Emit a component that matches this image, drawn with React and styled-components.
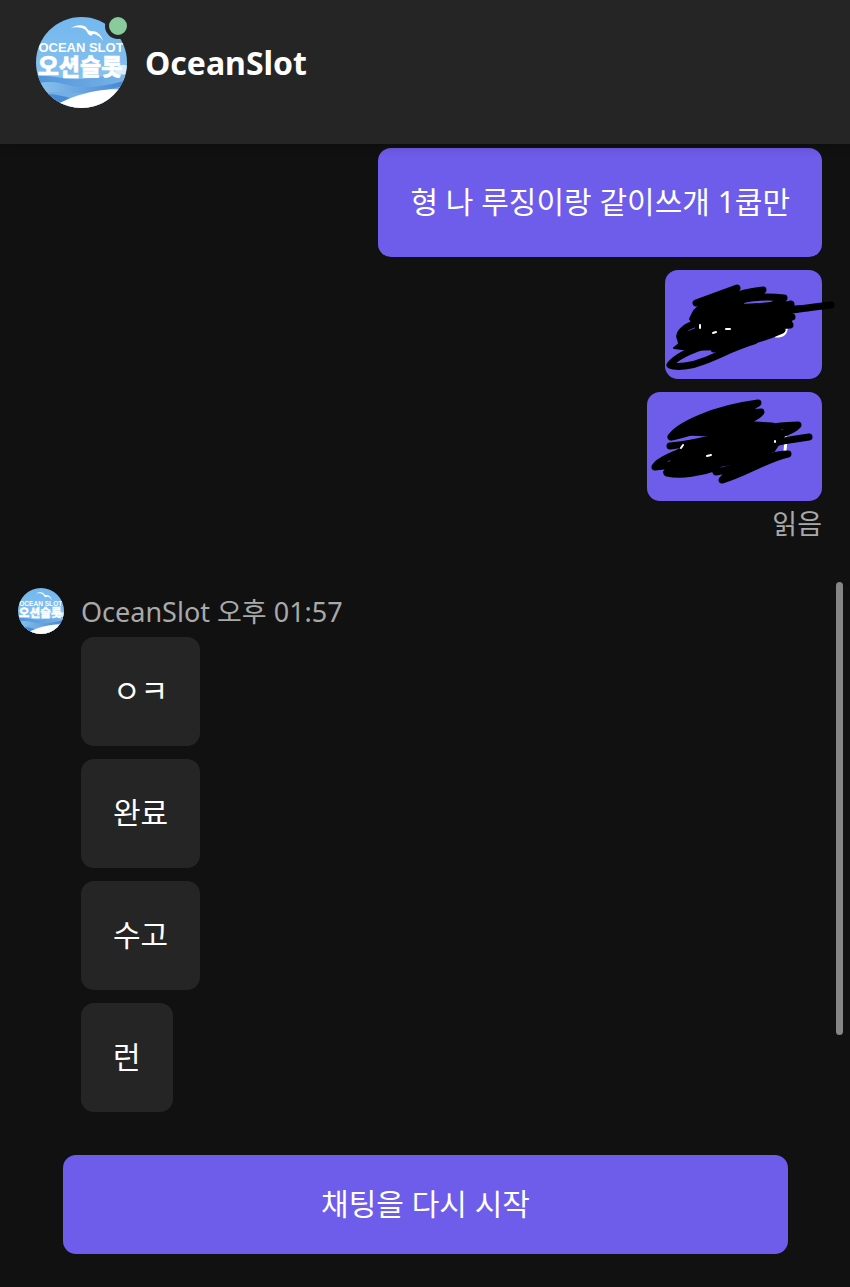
import React from "react";
import styled, { createGlobalStyle } from "styled-components";

const GlobalStyle = createGlobalStyle`
*{
	box-sizing: border-box;
}
body{
	margin: 0;
	background: #111111;
	color: #ffffff;
	font-family: "Noto Sans", "Noto Sans CJK KR", sans-serif;
}
`;

const received = ["ㅇㅋ", "완료", "수고", "런"];

const Logo = () => {
	return (
		<svg viewBox="0 0 91 91" width="100%" height="100%" role="img" aria-label="OceanSlot">
			<defs>
				<linearGradient id="sky" x1="0" y1="0" x2="0" y2="1">
					<stop offset="0" stopColor="#74b8ee" />
					<stop offset="1" stopColor="#8fc4ef" />
				</linearGradient>
				<linearGradient id="sea" x1="0" y1="0" x2="1" y2="0">
					<stop offset="0" stopColor="#8cc3ee" />
					<stop offset="1" stopColor="#4585d0" />
				</linearGradient>
				<linearGradient id="deep" x1="0" y1="0" x2="1" y2="0">
					<stop offset="0" stopColor="#4f94da" />
					<stop offset="1" stopColor="#7ab3e8" />
				</linearGradient>
				<clipPath id="round">
					<circle cx="45.5" cy="45.5" r="45.5" />
				</clipPath>
			</defs>
			<g clipPath="url(#round)">
				<rect width="91" height="91" fill="url(#sky)" />
				<path d="M80 52c3-5 8-5 12-3v14H74z" fill="#d9edfb" />
				<path d="M0 59c18-1 28 4 46 3s32-6 45-4v33H0z" fill="url(#deep)" />
				<path d="M0 67c14-4 24-1 36 2s36 0 55-6v28H0z" fill="url(#sea)" />
				<path d="M0 77c14-3 26-2 40-1s36-4 51-8v23H0z" fill="#73afe6" />
				<path d="M0 78c10-2 20-1 34 3l-16 10H0z" fill="#4789d3" />
				<path d="M18 89c12-7 26-12 42-15 12-2 22-2 31-1v18H18z" fill="#ffffff" />
				<path d="M35 11C39 8 46 7 50 10c2 3 3 4 5 4 6 0 10 3 12 10-3-5-7-7-10-7l-2 2-3-2c-1-3-3-5-6-6-4-1-8-1-11 0z" fill="#ffffff" />
				<text x="45" y="35" textAnchor="middle" fontFamily="Liberation Sans" fontSize="13" fontWeight="700" fill="#ffffff">OCEAN SLOT</text>
				<text x="44" y="58" textAnchor="middle" fontFamily="Noto Sans CJK KR" fontSize="23" fontWeight="900" fill="#ffffff" stroke="#ffffff" strokeWidth="0.5">오션슬롯</text>
			</g>
		</svg>
	)
}

const ScribbleOne = () => {
	return (
		<Scribble viewBox="0 0 210 130" aria-hidden="true">
			<path className="text" d="M146 66c1 6-3 9-10 9" />
			<path className="core" d="M60 44L90 31l6 4 20-2-16 11 20-1 25-2 7 5-1 16-35 16-36 10-30 1-16-2 10-8 13-11-7-10 4-8z" />
			<path d="M56 42L97 27 72 43M56 54C70 42 100 31 123 29 118 35 98 38 90 44M84 44C104 36 126 35 144 37 138 43 124 48 110 50" />
			<path d="M56 56L94 41M57 58C78 52 98 48 118 46M60 61C48 64 38 71 40 77c16-5 32-16 56-22" />
			<path d="M41 80c16-3 30-8 44-14M44 85c16 0 30-5 44-10M128 48l23-5M140 51c18-3 34-5 51-7M142 49l26-2" />
			<path d="M120 60l32-4M124 66l26-2M74 88c26-4 46-9 68-19" />
			<path d="M70 83C54 88 36 95 30 104c6 3 22 1 34-4 16-6 30-14 50-20" />
			<path className="speck" d="M60 64v3M73 72l3-1M86 68l4 0" />
		</Scribble>
	)
}

const ScribbleTwo = () => {
	return (
		<Scribble viewBox="0 0 210 130" aria-hidden="true">
			<path className="text" d="M145 52c1 5 1 10 0 16" />
			<path className="core" d="M36 51C48 40 66 31 88 27l10 12 32 3 16 8-12 18-36 12-24 4-26 7-24-2 14-22 32-10 10-4z" />
			<path d="M31 54C38 43 72 26 118 20 106 28 88 32 74 38M31 54C58 50 90 30 121 29 116 36 104 38 96 40M98 41l34 2" />
			<path d="M30 63C52 61 74 55 98 50M110 46c18-1 34-4 48-4-6 7-20 10-34 14M126 62c14-4 28-6 43-8" />
			<path d="M38 70C28 74 17 79 15 84c16-1 28-3 44-10M15 84l14-2M27 90c14 3 34 0 50-6" />
			<path d="M80 79c-4 4-6 7-4 10 22-3 46-17 72-18-20 4-44 20-66 26 4-6 18-12 28-18" />
			<path className="speck" d="M41 65l2-3M67 73l4-1M135 58v1" />
		</Scribble>
	)
}

const App = () => {
	return (
		<Page>
			<GlobalStyle />
			<Header>
				<HeaderAvatar>
					<Logo />
					<Status />
				</HeaderAvatar>
				<h1>OceanSlot</h1>
			</Header>
			<Messages>
				<Sent>
					<Bubbles $sent>
						<Bubble $sent>형 나 루징이랑 같이쓰개 1쿱만</Bubble>
						<Bubble $sent $width="157px"><ScribbleOne /></Bubble>
						<Bubble $sent $width="175px"><ScribbleTwo /></Bubble>
					</Bubbles>
					<Note>읽음</Note>
				</Sent>
				<Received>
					<Avatar><Logo /></Avatar>
					<Thread>
						<Note>OceanSlot 오후 01:57</Note>
						<Bubbles>
							{received.map((text) => (
								<Bubble key={text}>{text}</Bubble>
							))}
						</Bubbles>
					</Thread>
				</Received>
				<Thumb />
			</Messages>
			<Footer>
				<Restart type="button">채팅을 다시 시작</Restart>
			</Footer>
		</Page>
	)
}


const Page = styled.div`
display: flex;
flex-direction: column;
min-height: 100vh;
`;

const Header = styled.header`
display: flex;
align-items: center;
gap: 18px;
padding: 17px 36px 36px;
background: #252525;
box-shadow: 0 0 12px rgba(0, 0, 0, 0.3);
z-index: 1;
h1{
	margin: 0;
	font-size: 32px;
	line-height: 44px;
	font-weight: 700;
}
`;

const Avatar = styled.div`
flex: none;
width: 46px;
height: 46px;
svg{
	display: block;
}
`;

const HeaderAvatar = styled(Avatar)`
position: relative;
width: 91px;
height: 91px;
`;

const Status = styled.span`
position: absolute;
top: -4px;
right: -4px;
width: 26px;
height: 26px;
border: 4px solid #252525;
border-radius: 50%;
background: #8acb9d;
`;

const Messages = styled.main`
position: relative;
flex: 1;
padding: 4px 28px 43px 18px;
`;

const Sent = styled.section`
display: flex;
flex-direction: column;
align-items: flex-end;
gap: 5px;
`;

const Bubbles = styled.div`
display: flex;
flex-direction: column;
align-items: ${(props) => (props.$sent ? "flex-end" : "flex-start")};
gap: 13px;
`;

const Bubble = styled.div`
position: relative;
width: ${(props) => props.$width || "auto"};
min-height: 109px;
padding: 31px 32px 33px;
border-radius: 13px;
background: ${(props) => (props.$sent ? "#6e5cea" : "#252525")};
font-size: 30px;
line-height: 45px;
`;

const Scribble = styled.svg`
position: absolute;
top: -9px;
right: -28px;
width: 210px;
height: 130px;
fill: none;
stroke: #000000;
stroke-width: 7;
stroke-linecap: round;
stroke-linejoin: round;
.core{
	fill: #000000;
	stroke-width: 2;
}
.text{
	stroke: #ffffff;
	stroke-width: 3;
}
.speck{
	stroke: #ffffff;
	stroke-width: 2;
}
`;

const Note = styled.p`
margin: 0;
color: #a9a9a9;
font-size: 27px;
line-height: 36px;
`;

const Received = styled.section`
display: flex;
gap: 17px;
padding-top: 46px;
`;

const Thread = styled.div`
display: flex;
flex-direction: column;
gap: 7px;
padding-top: 6px;
`;

const Thumb = styled.div`
position: absolute;
top: 43.3%;
right: 7px;
width: 7px;
height: 44.8%;
border-radius: 4px;
background: #868686;
`;

const Footer = styled.footer`
padding: 0 62px 33px 63px;
`;

const Restart = styled.button`
display: block;
width: 100%;
padding: 26px 32px 28px;
border: 0;
border-radius: 13px;
background: #6e5cea;
color: #ffffff;
font-family: inherit;
font-size: 30px;
line-height: 45px;
cursor: pointer;
`;


export default App;
